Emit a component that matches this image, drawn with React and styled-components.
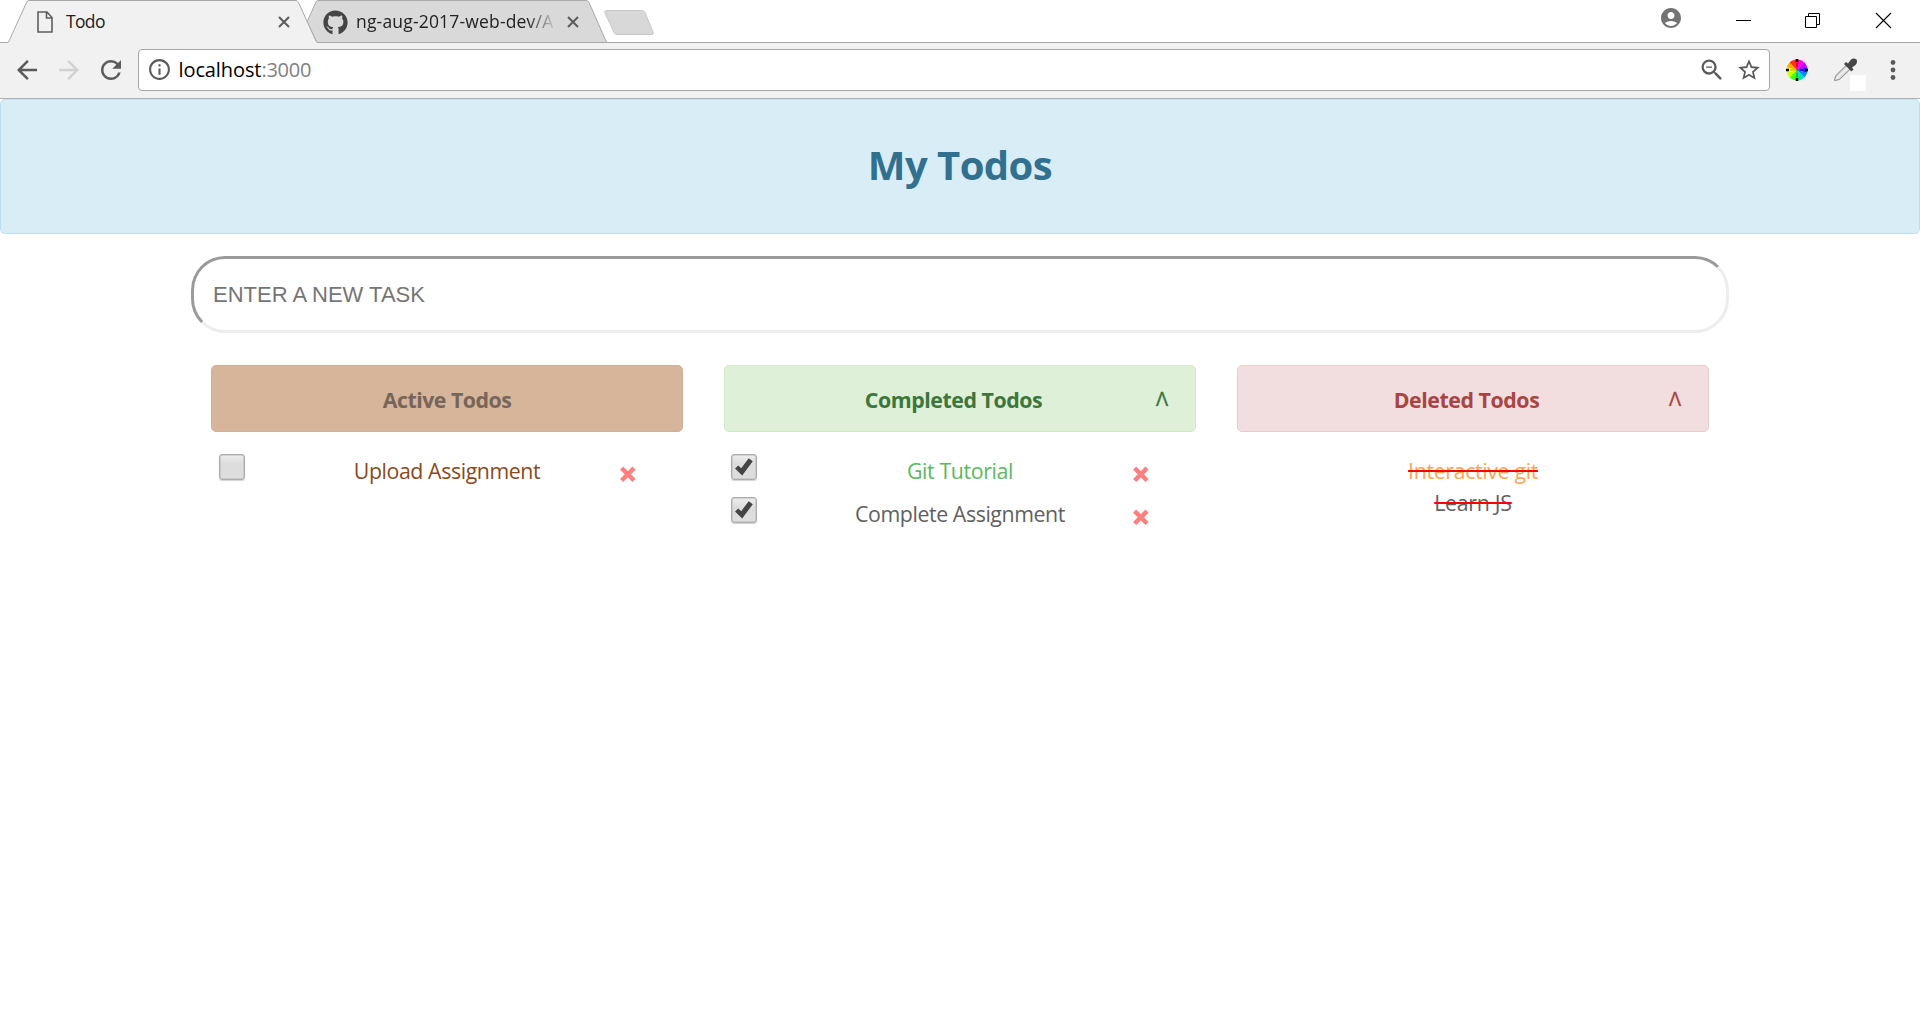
import React from 'react';
import styled, { createGlobalStyle } from 'styled-components';
import {
  MdArrowBack, MdArrowForward, MdRefresh, MdInfoOutline, MdZoomOut, MdStarBorder, MdAccountCircle,
} from 'react-icons/md';
import { FaGithub } from 'react-icons/fa';

const GlobalStyle = createGlobalStyle`
  * { box-sizing: border-box; }
  body {
    margin: 0;
    background: #fff;
    font-family: "Open Sans", "Noto Sans", sans-serif;
    overflow: hidden;
  }
  svg { display: block; flex: none; }
`;

/* ---------- browser window ---------- */

const TabStrip = styled.div`
  display: flex;
  height: 43px;
  background: #fff;
  border-bottom: 1px solid #a9a9a9;
`;

const Tab = styled.div`
  position: relative;
  display: flex;
  align-items: center;
  width: ${(p) => p.$width}px;
  height: 43px;
  margin-left: ${(p) => p.$offset}px;
  padding: 1px 0 0 ${(p) => p.$inset}px;
  z-index: ${(p) => (p.$active ? 2 : 1)};
`;

const TabShape = styled.svg`
  position: absolute;
  left: 0;
  top: 0;
  z-index: -1;
`;

const TabTitle = styled.span`
  width: ${(p) => p.$width}px;
  margin: 0 12px 2px ${(p) => p.$gap}px;
  overflow: hidden;
  white-space: nowrap;
  font-size: 17.5px;
  line-height: 26px;
  letter-spacing: ${(p) => p.$spacing}px;
  color: #222;
  ${(p) => p.$fade && 'mask-image: linear-gradient(to right, #000 86%, transparent 101%);'}
`;

const NewTab = styled.svg`
  margin: 9px 0 0 -4px;
`;

const WindowControls = styled.div`
  display: flex;
  align-items: flex-start;
  margin-left: auto;
  padding-right: 28px;
`;

const Account = styled(MdAccountCircle)`
  margin: 6px 52px 0 0;
  color: #737373;
`;

const Control = styled.svg`
  margin: 12px 0 0 ${(p) => p.$gap || 0}px;
`;

const Toolbar = styled.div`
  display: flex;
  align-items: center;
  height: 56px;
  padding: 0 0 2px 12px;
  background: #f1f1f1;
  border-bottom: 1px solid #b2b2b2;
`;

const NavIcon = styled.span`
  display: flex;
  width: 30px;
  margin-right: ${(p) => p.$gap}px;
  color: ${(p) => (p.$off ? '#d2d2d2' : '#5a5a5a')};
`;

const AddressBar = styled.div`
  display: flex;
  align-items: center;
  width: 1632px;
  height: 42px;
  padding: 0 7px 0 8px;
  background: #fff;
  border: 1px solid #a6a6a6;
  border-radius: 4px;
  color: #5a5a5a;
`;

const Url = styled.span`
  flex: 1;
  margin: 1px 0 0 6.5px;
  font-size: 20px;
  line-height: 30px;
  letter-spacing: -0.1px;
  color: #000;
`;

const Port = styled.span`
  color: #808080;
  letter-spacing: -0.25px;
`;

const StarIcon = styled(MdStarBorder)`
  margin-left: 10px;
`;

const Extensions = styled.div`
  display: flex;
  align-items: center;
`;

const Wheel = styled.span`
  display: flex;
  margin-left: 15px;
`;

const Dropper = styled.svg`
  margin: 0 0 -10px 24px;
`;

const Menu = styled.svg`
  margin-left: 22px;
`;

/* ---------- page ---------- */

const Banner = styled.header`
  height: 135px;
  padding-top: 35px;
  background: #d9edf7;
  border: 1px solid #bcdff1;
  border-radius: 5px;
  text-align: center;
`;

const Title = styled.h1`
  margin: 0;
  font-size: 40px;
  line-height: 60px;
  font-weight: 700;
  letter-spacing: -0.55px;
  color: #31708f;
`;

const Main = styled.main`
  width: 1538px;
  margin: 22px auto 0;
`;

const TaskInput = styled.input`
  display: block;
  width: 100%;
  height: 77px;
  padding: 1px 19px 0;
  border: 3px solid;
  border-color: #9a9a9a #ededed #ededed #9a9a9a;
  border-radius: 34px;
  outline: none;
  font-family: "Liberation Sans", Arial, sans-serif;
  font-size: 22px;
  letter-spacing: 0;
  &::placeholder { color: #757575; opacity: 1; }
`;

const Columns = styled.div`
  display: grid;
  grid-template-columns: repeat(3, 472px);
  column-gap: 41px;
  padding: 32px 20px 0;
`;

const tones = {
  active: { bg: '#d7b59a', line: '#d3af93', text: '#75655b' },
  completed: { bg: '#dff0d8', line: '#d0e9c6', text: '#3c763d' },
  deleted: { bg: '#f2dede', line: '#ebcccc', text: '#a94442' },
};

const PanelHead = styled.div`
  display: flex;
  height: 67px;
  padding: 18px 26px 0;
  background: ${(p) => tones[p.$tone].bg};
  border: 1px solid ${(p) => tones[p.$tone].line};
  border-radius: 5px;
  color: ${(p) => tones[p.$tone].text};
`;

const PanelTitle = styled.h2`
  flex: 1;
  margin: 0;
  text-align: center;
  font-size: 21.33px;
  line-height: 32px;
  font-weight: 700;
  letter-spacing: ${(p) => p.$spacing}px;
`;

const Caret = styled.span`
  width: 13px;
  font-size: 20px;
  line-height: 30px;
  -webkit-text-stroke: 0.4px currentColor;
  text-shadow: 0 1px 0 #fff;
`;

const List = styled.div`
  padding-top: 22px;
`;

const Row = styled.div`
  display: grid;
  grid-template-columns: 63px 1fr 63px;
  height: ${(p) => p.$height}px;
`;

const CheckCell = styled.span`
  padding-left: ${(p) => p.$inset}px;
`;

const CheckBox = styled.span`
  display: flex;
  align-items: center;
  justify-content: center;
  width: 26px;
  height: 26px;
  background: linear-gradient(#ededed, #dcdcdc 40%, #dedede);
  border: 1px solid #adadad;
  border-radius: 3px;
  box-shadow: 0 1px 1px rgba(0, 0, 0, 0.18), inset 0 0 0 0.5px #b5b5b5;
`;

const Label = styled.span`
  grid-column: 2;
  justify-self: center;
  padding-top: 1px;
  font-size: 21.33px;
  line-height: 32px;
  letter-spacing: ${(p) => p.$spacing}px;
  color: ${(p) => p.$color};
  ${(p) => p.$struck && 'text-decoration: line-through 2px #f00;'}
`;

const Remove = styled.span`
  padding-top: 12px;
`;

const Cross = () => (
  <svg width="16" height="17" viewBox="0 0 16 17">
    <path d="M1.600 2.100 14 14.500M14 2.100 1.600 14.500" stroke="#ff7f7f" strokeWidth="4.400" />
  </svg>
);

const Tick = () => (
  <svg width="20" height="20" viewBox="0 0 20 20">
    <path d="M1 11.600 4.300 8.400 7.200 11.200 14.700 1.200 18.800 4.200 8.200 18.400Z" fill="#444" />
  </svg>
);

const CloseTab = () => (
  <svg width="12" height="12" viewBox="0 0 12 12">
    <path d="M1 1 11 11M11 1 1 11" stroke="#5c5c5c" strokeWidth="2" />
  </svg>
);

const lists = [
  {
    tone: 'active', title: 'Active Todos', spacing: -0.5, inset: 8, height: 43,
    items: [{ text: 'Upload Assignment', color: '#8a4a1c', spacing: -0.42, done: false }],
  },
  {
    tone: 'completed', title: 'Completed Todos', spacing: -0.45, inset: 7, height: 43, caret: true,
    items: [
      { text: 'Git Tutorial', color: '#5cb85c', spacing: -0.38, done: true },
      { text: 'Complete Assignment', color: '#616161', spacing: -0.42, done: true },
    ],
  },
  {
    tone: 'deleted', title: 'Deleted Todos', spacing: -0.43, height: 32, caret: true,
    items: [
      { text: 'Interactive git', color: '#ffa550', spacing: -0.35, struck: true },
      { text: 'Learn JS', color: '#616161', spacing: -0.28, struck: true },
    ],
  },
];

const wheelColors = ['#f0f', '#c0f', '#22f', '#08f', '#0dc', '#0e4', '#4f0', '#cf0', '#ff0', '#fa0', '#f30', '#f06'];

const ColorWheel = () => (
  <svg width="24" height="24" viewBox="-12 -12 24 24">
    {wheelColors.map((color, i) => {
      const a = ((i * 30 - 75) * Math.PI) / 180;
      const b = ((i * 30 - 44) * Math.PI) / 180;
      return (
        <path
          key={color}
          d={`M0 0L${10.5 * Math.cos(a)} ${10.5 * Math.sin(a)}A10.5 10.5 0 0 1 ${10.5 * Math.cos(b)} ${10.5 * Math.sin(b)}Z`}
          fill={color}
        />
      );
    })}
    <path d="M0-11V-8M0 8V11M-11 0H-8M8 0H11" stroke="#000" strokeWidth="2.400" />
    <path d="M0-7V7M-7 0H7" stroke="#000" strokeOpacity=".3" />
  </svg>
);

function Browser() {
  return (
    <>
      <TabStrip>
        <Tab $active $width={311} $offset={7} $inset={30}>
          <TabShape width="311" height="43" viewBox="0 0 311 43">
            <path d="M0 43V42.500Q1.500 42.500 2 41L19.500 2.500Q20.500 .5 22 .5H289Q290.500 .5 291.500 2.500L309 41Q309.500 42.500 311 42.500V43Z" fill="#f1f1f1" />
            <path d="M0 42.500Q1.500 42.500 2 41L19.500 2.500Q20.500 .5 22 .5H289Q290.500 .5 291.500 2.500L309 41Q309.500 42.500 311 42.500" fill="none" stroke="#a9a9a9" />
          </TabShape>
          <svg width="16" height="22" viewBox="0 0 16 22">
            <path d="M1 1H10L15 6.500V21H1ZM9.500 1V7H15" fill="none" stroke="#5f5f5f" strokeWidth="1.600" />
          </svg>
          <TabTitle $width={200} $gap={13} $spacing={-0.65}>Todo</TabTitle>
          <CloseTab />
        </Tab>
        <Tab $width={300} $offset={-11} $inset={16}>
          <TabShape width="301" height="43" viewBox="0 0 301 43">
            <path d="M0 22 8.500 3Q9.500 .5 11 .5H279Q281 .5 282 2.500L298.500 40Q299.500 42.500 300.500 42.500H10Z" fill="#d9d9d9" stroke="#a9a9a9" />
          </TabShape>
          <FaGithub size={25} color="#444" />
          <TabTitle $width={199} $gap={8} $spacing={0.18} $fade>ng-aug-2017-web-dev/A</TabTitle>
          <CloseTab />
        </Tab>
        <NewTab width="54" height="28" viewBox="0 0 54 28">
          <path d="M4 1.500H39Q41 1.500 42 3.500L50 23Q51 25.500 49 25.500H14Q12 25.500 11 23.500L2 4Q1 1.500 4 1.500Z" fill="#d8d8d8" stroke="#c8c8c8" />
        </NewTab>
        <WindowControls>
          <Account size={24} />
          <Control width="17" height="17" viewBox="0 0 17 17"><path d="M1 8.500H16" stroke="#000" /></Control>
          <Control $gap={52} width="17" height="17" viewBox="0 0 17 17">
            <path d="M1.500 4.500H12.500V15.500H1.500ZM4.500 4.500V1.500H15.500V12.500H12.500" fill="none" stroke="#000" />
          </Control>
          <Control $gap={54} width="17" height="17" viewBox="0 0 17 17">
            <path d="M1 1 16 16M16 1 1 16" stroke="#000" strokeWidth="1.100" />
          </Control>
        </WindowControls>
      </TabStrip>
      <Toolbar>
        <NavIcon $gap={12}><MdArrowBack size={30} /></NavIcon>
        <NavIcon $gap={12} $off><MdArrowForward size={30} /></NavIcon>
        <NavIcon $gap={12}><MdRefresh size={30} /></NavIcon>
        <AddressBar>
          <MdInfoOutline size={25} />
          <Url>localhost<Port>:3000</Port></Url>
          <MdZoomOut size={28} />
          <StarIcon size={26} />
        </AddressBar>
        <Extensions>
          <Wheel><ColorWheel /></Wheel>
          <Dropper width="34" height="34" viewBox="0 0 34 34">
            <defs>
              <linearGradient id="glass" x1="0" y1="0" x2="1" y2="1">
                <stop offset="0.2" stopColor="#777" />
                <stop offset="0.5" stopColor="#f4f4f4" />
                <stop offset="0.8" stopColor="#888" />
              </linearGradient>
            </defs>
            <path d="M1.500 22.500 2.500 18 14 6.500 18 10.500 6.500 21.500Z" fill="url(#glass)" stroke="#8a8a8a" />
            <path d="M11 6 13 4 15 5.500 18 1.500Q21-.5 23.500 1.500 25 4 22.500 7L19 9.500 20.500 11.500 18.500 13.500Z" fill="#464646" />
            <rect x="17" y="17" width="16" height="16" rx="1" fill="#fff" />
          </Dropper>
          <Menu width="8" height="22" viewBox="0 0 8 22">
            <g fill="#5a5a5a"><circle cx="4" cy="3.500" r="2.400" /><circle cx="4" cy="11" r="2.400" /><circle cx="4" cy="18.500" r="2.400" /></g>
          </Menu>
        </Extensions>
      </Toolbar>
    </>
  );
}

export default function App() {
  return (
    <>
      <GlobalStyle />
      <Browser />
      <Banner><Title>My Todos</Title></Banner>
      <Main>
        <TaskInput placeholder="ENTER A NEW TASK" />
        <Columns>
          {lists.map((list) => (
            <section key={list.tone}>
              <PanelHead $tone={list.tone}>
                <PanelTitle $spacing={list.spacing}>{list.title}</PanelTitle>
                {list.caret && <Caret>Λ</Caret>}
              </PanelHead>
              <List>
                {list.items.map((item) => (
                  <Row key={item.text} $height={list.height}>
                    {!item.struck && (
                      <CheckCell $inset={list.inset}><CheckBox>{item.done && <Tick />}</CheckBox></CheckCell>
                    )}
                    <Label $color={item.color} $spacing={item.spacing} $struck={item.struck}>{item.text}</Label>
                    {!item.struck && <Remove><Cross /></Remove>}
                  </Row>
                ))}
              </List>
            </section>
          ))}
        </Columns>
      </Main>
    </>
  );
}
